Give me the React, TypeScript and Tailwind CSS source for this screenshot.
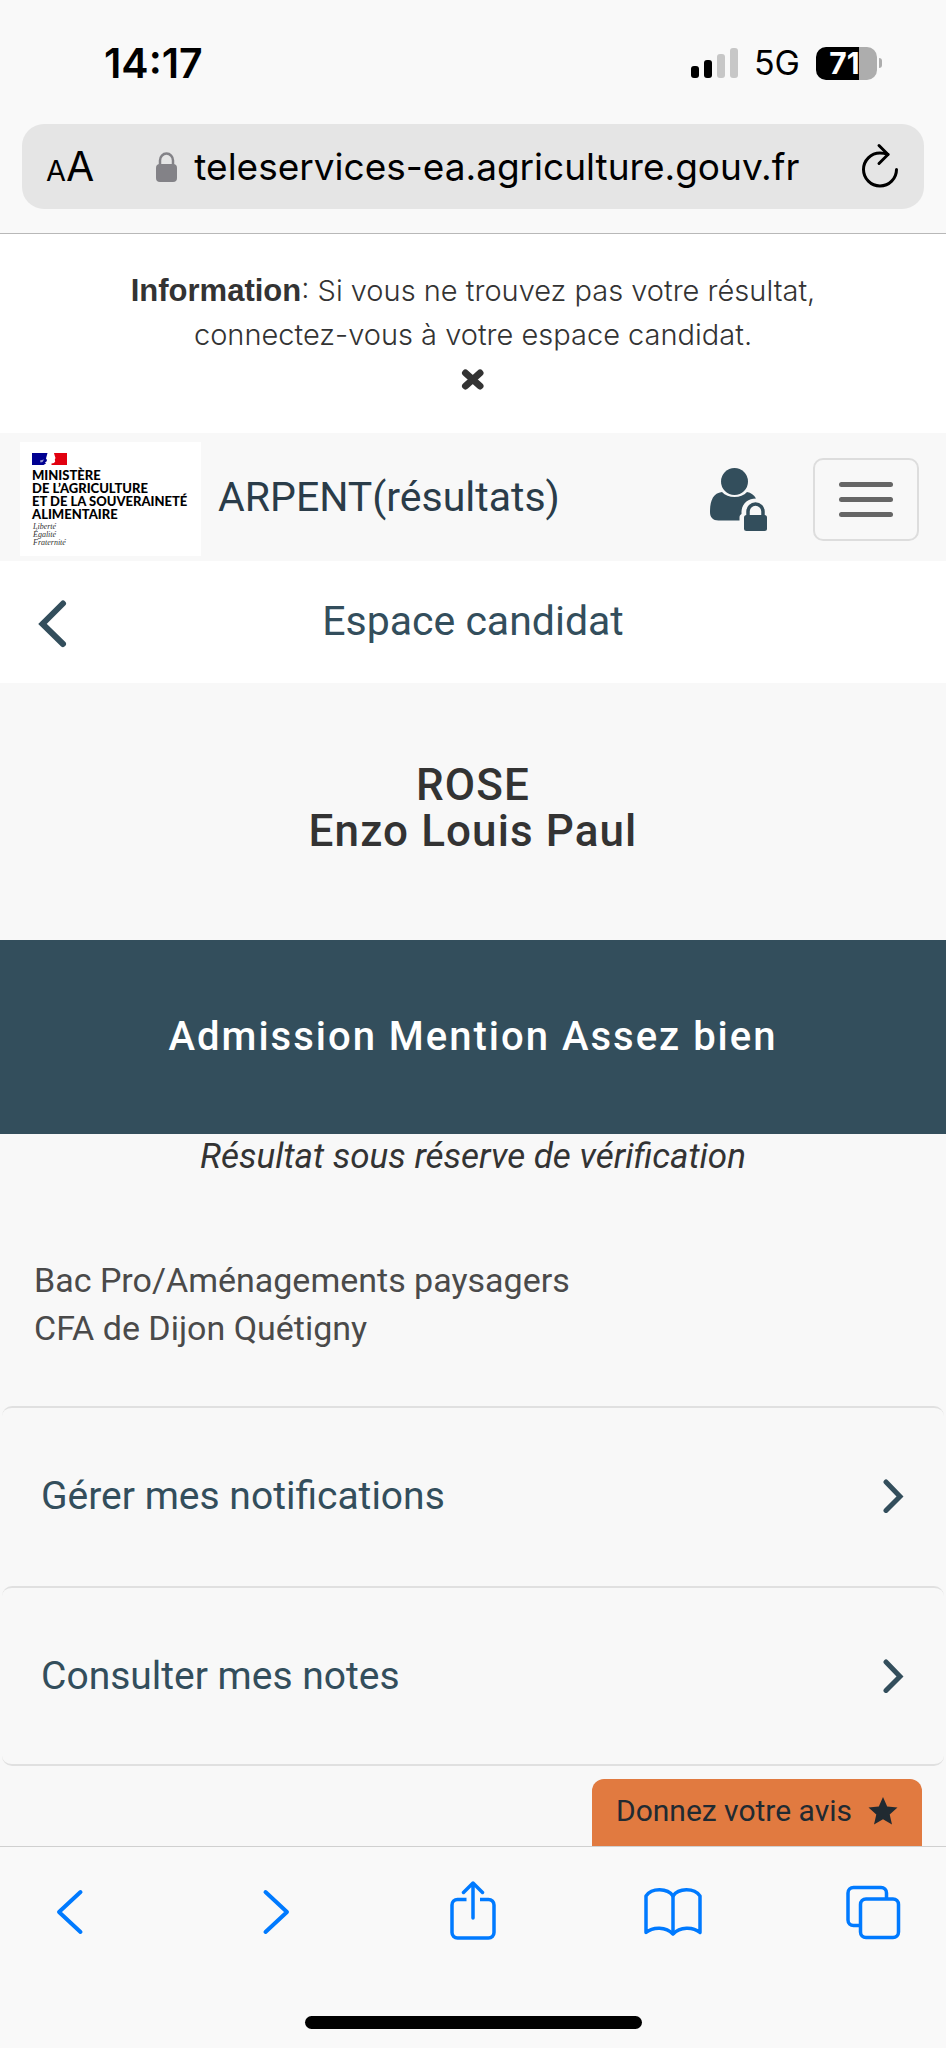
import React from 'react';

const links = [
  { id: 'notifications', label: 'Gérer mes notifications' },
  { id: 'notes', label: 'Consulter mes notes' },
];

function StatusBar() {
  return (
    <div className="flex items-center justify-between pt-[42px] pl-[104px] pr-16 font-['Inter',sans-serif] text-black">
      <time className="text-[41px] leading-[42px] font-semibold">14:17</time>
      <div className="flex items-center">
        <svg width="47" height="31" viewBox="0 0 47 31">
          <rect x="0" y="18" width="8" height="12" rx="3" />
          <rect x="13" y="12" width="8" height="18" rx="3" />
          <rect x="26" y="6" width="8" height="24" rx="3" fill="#c7c7c7" />
          <rect x="39" y="0" width="8" height="30" rx="3" fill="#c7c7c7" />
        </svg>
        <span className="ml-4 text-[34px] leading-[42px]">5G</span>
        <div className="ml-4 flex items-center gap-[2px]">
          <div className="flex h-[33px] w-[61px] items-center justify-center rounded-[10px] bg-[linear-gradient(90deg,#000_71%,#adadad_71%)] pr-1 text-[30px] leading-[33px] font-bold text-white">
            71
          </div>
          <div className="h-[10px] w-[3px] rounded-r-full bg-[#adadad]" />
        </div>
      </div>
    </div>
  );
}

function AddressBar() {
  return (
    <div className="mx-[22px] mt-10 mb-6 flex h-[85px] items-center rounded-[22px] bg-[#e5e5e5] pr-6 pl-6 font-['Inter',sans-serif] text-black">
      <button type="button" aria-label="Taille du texte" className="flex items-baseline pt-1">
        <span className="text-[29px] leading-10">A</span>
        <span className="text-[41px] leading-10">A</span>
      </button>
      <svg className="ml-[62px] shrink-0" width="22" height="30" viewBox="0 0 22 30">
        <rect x="0" y="12" width="21" height="18" rx="4" fill="#838287" />
        <path d="M4 14V8.500a6.500 7 0 0 1 13 0V14" fill="none" stroke="#838287" strokeWidth="2.500" />
      </svg>
      <input
        aria-label="Adresse"
        className="ml-4 min-w-0 flex-1 bg-transparent text-[37px] outline-none"
        defaultValue="teleservices-ea.agriculture.gouv.fr"
      />
      <button type="button" aria-label="Actualiser">
        <svg width="40" height="48" viewBox="0 0 40 48" fill="none" stroke="#000" strokeWidth="3" strokeLinecap="round" strokeLinejoin="round">
          <path d="M36.500 26.500a16.500 16.500 0 1 1-16.500-16.500c3 0 5.500.5 8 1.500" />
          <path d="M19 2.500l9 9-9 9" />
        </svg>
      </button>
    </div>
  );
}

function MinistryLogo() {
  return (
    <div className="h-[114px] w-[181px] bg-white pt-[11px] pl-3 text-black">
      <svg width="35" height="12" viewBox="0 0 35 12">
        <rect width="17" height="12" fill="#000091" />
        <rect x="17" width="18" height="12" fill="#e1000f" />
        <path d="M15.500 0h6.500l.5 2 1 3-.7 1.500.4 2-1.200 1.500-2.500.5V12h-8l2.500-1.500-1-1 1.500-1 .5-1.500-1-1.500z" fill="#fff" />
        <path d="M8 7.500l4-1-1.500 2.500-2 .5z" fill="#fff" opacity=".6" />
      </svg>
      <div className="mt-[4px] font-['Lato',sans-serif] text-[13px] leading-[13px] font-black whitespace-nowrap">
        <p>MINISTÈRE</p>
        <p>DE L’AGRICULTURE</p>
        <p>ET DE LA SOUVERAINETÉ</p>
        <p>ALIMENTAIRE</p>
      </div>
      <div className="mt-[2px] pl-[1px] font-['Liberation_Serif',serif] text-[8px] leading-[8px] text-[#333] italic">
        <p>Liberté</p>
        <p>Égalité</p>
        <p>Fraternité</p>
      </div>
    </div>
  );
}

function Navbar() {
  return (
    <nav className="flex items-center bg-[#f8f8f8] pt-[9px] pr-[27px] pb-[5px] pl-5">
      <MinistryLogo />
      <a href="#accueil" className="ml-[17px] pb-1 text-[41px] leading-[48px] text-[#2a3c49]">
        ARPENT(résultats)
      </a>
      <a href="#connexion" aria-label="Connexion" className="mr-[46px] ml-auto">
        <svg width="57" height="63" viewBox="0 0 57 63" fill="#334e5c">
          <circle cx="24.500" cy="13.500" r="13.500" />
          <path d="M12 24c3 3.500 7.500 5 12.500 5s9.500-1.500 12.500-5c4 .5 7 3 9 6.500-8 0-14 5-14.500 13v2.500c-1.500.8-2 2-2 3.500v3H8.500c-5.500 0-8.500-3-8.500-8.500C0 33 3 25 12 24z" />
          <rect x="34" y="47" width="23" height="16" rx="2.500" />
          <path d="M38 49v-5.500a7.500 7.500 0 0 1 15 0V49" fill="none" stroke="#334e5c" strokeWidth="3.500" />
        </svg>
      </a>
      <button type="button" aria-label="Menu" className="flex h-[83px] w-[106px] flex-col items-center justify-center gap-[10px] rounded-[10px] border-2 border-[#ddd]">
        <span className="h-[5px] w-[54px] rounded-full bg-[#666]" />
        <span className="h-[5px] w-[54px] rounded-full bg-[#666]" />
        <span className="h-[5px] w-[54px] rounded-full bg-[#666]" />
      </button>
    </nav>
  );
}

function Toolbar() {
  return (
    <footer className="border-t border-[#d0d0d0] bg-[#f9f9f9] pt-[34px] pb-[19px]">
      <div className="flex justify-between px-[43px]">
        <button type="button" aria-label="Précédent">
          <svg width="60" height="62" viewBox="0 0 60 62" fill="none" stroke="#007aff" strokeWidth="4" strokeLinecap="round" strokeLinejoin="round">
            <path d="M37.500 11L16 31L37.500 51" />
          </svg>
        </button>
        <button type="button" aria-label="Suivant">
          <svg width="60" height="62" viewBox="0 0 60 62" fill="none" stroke="#007aff" strokeWidth="4" strokeLinecap="round" strokeLinejoin="round">
            <path d="M22.500 11L44 31L22.500 51" />
          </svg>
        </button>
        <button type="button" aria-label="Partager">
          <svg width="60" height="62" viewBox="0 0 60 62" fill="none" stroke="#007aff" strokeWidth="3.500" strokeLinecap="round" strokeLinejoin="round">
            <path d="M23.500 18.500H14.500a5.500 5.500 0 0 0-5.500 5.500v27.500a5.500 5.500 0 0 0 5.500 5.500h31a5.500 5.500 0 0 0 5.500-5.500V24a5.500 5.500 0 0 0-5.500-5.500H37" strokeLinecap="butt" />
            <path d="M30 37V2.500M20.500 11.500L30 2L39.500 11.500" />
          </svg>
        </button>
        <button type="button" aria-label="Signets">
          <svg width="60" height="62" viewBox="0 0 60 62" fill="none" stroke="#007aff" strokeWidth="3.500" strokeLinecap="round" strokeLinejoin="round">
            <path d="M30 15C24.500 7 9 6.500 3 15V51.500c7-6 20-6 27 1.500C37 45.500 50 45.500 57 51.500V15C51 6.500 35.500 7 30 15z" />
            <path d="M30 15V52.500" />
          </svg>
        </button>
        <button type="button" aria-label="Onglets">
          <svg width="60" height="62" viewBox="0 0 60 62" fill="none" stroke="#007aff" strokeWidth="3.500">
            <path d="M17.500 44.500H10.500a5.500 5.500 0 0 1-5.500-5.500V12a5.500 5.500 0 0 1 5.500-5.500h27.500a5.500 5.500 0 0 1 5.500 5.500v6.500" />
            <rect x="17.500" y="18" width="38" height="38.500" rx="5.500" />
          </svg>
        </button>
      </div>
      <div className="mx-auto mt-[73px] h-[13px] w-[337px] rounded-full bg-black" />
    </footer>
  );
}

function App() {
  return (
    <div className="flex min-h-screen flex-col bg-[#f8f8f8] font-['Roboto',sans-serif] text-[#333]">
      <header className="border-b border-[#b8b8b8] bg-[#f9f9f9]">
        <StatusBar />
        <AddressBar />
      </header>

      <div className="bg-white px-24 pt-[35px] pb-8 text-center font-['Inter',sans-serif] text-[29px] leading-[44px] font-light">
        <p>
          <strong className="font-['Liberation_Sans',sans-serif] text-[31px] font-bold">Information</strong>: Si vous ne
          trouvez pas votre résultat, <br />
          connectez-vous à votre espace candidat.
        </p>
        <button type="button" aria-label="Fermer" className="mx-auto flex h-[44px] items-center">
          <svg width="24" height="21" viewBox="0 0 24 21" stroke="#333" strokeWidth="7" strokeLinecap="round">
            <path d="M4.500 4L19 17M19 4L4.500 17" />
          </svg>
        </button>
      </div>

      <Navbar />

      <div className="grid grid-cols-[1fr_auto_1fr] items-center bg-white px-9 pt-[36px] pb-[38px] text-[#334e5c]">
        <a href="#retour" aria-label="Retour">
          <svg width="32" height="54" viewBox="0 -6 32 54" className="-my-1" fill="none" stroke="#334e5c" strokeWidth="6" strokeLinecap="round">
            <path d="M27 3.500L6.500 24L27 44" />
          </svg>
        </a>
        <h1 className="text-[41px] leading-[48px]">Espace candidat</h1>
      </div>

      <main className="flex flex-1 flex-col">
        <h2 className="pt-[79px] pb-[86px] text-center text-[44px] leading-[46px] font-medium tracking-wide">
          ROSE
          <br />
          Enzo Louis Paul
        </h2>
        <p className="bg-[#334e5c] py-[73px] text-center text-[40px] leading-[48px] font-medium tracking-wider text-white">
          Admission Mention Assez bien
        </p>
        <p className="text-center text-[35px] leading-[46px] italic">Résultat sous réserve de vérification</p>
        <p className="px-[34px] pt-[76px] pb-[54px] text-[34px] leading-[48px] text-[#4a4a4a]">
          Bac Pro/Aménagements paysagers
          <br />
          CFA de Dijon Quétigny
        </p>

        <ul className="mx-[2px]">
          {links.map((link) => (
            <li key={link.id} className="group">
              <a
                href={'#' + link.id}
                className="flex items-center justify-between rounded-[10px] border-t-2 border-[#e0e0e0] pt-16 pb-[66px] pr-[38px] pl-[39px] text-[39px] leading-[48px] text-[#334e5c] group-last:border-b-2 group-last:pb-16"
              >
                {link.label}
                <svg width="24" height="34" viewBox="0 0 24 34" fill="none" stroke="#334e5c" strokeWidth="5" strokeLinecap="round">
                  <path d="M4 3L18 17.500L4 31.500" />
                </svg>
              </a>
            </li>
          ))}
        </ul>

        <a href="#avis" className="mt-auto mr-6 flex items-center gap-4 self-end rounded-t-xl bg-[#e17a40] pt-[14px] pr-6 pb-[17px] pl-6 text-[30px] leading-9 text-[#212a31]">
          Donnez votre avis
          <svg width="30" height="28" viewBox="0 0 30 28" fill="#212a31">
            <path d="M15 0l4.200 9.500 10.300 1-7.800 6.900 2.300 10.200-9-5.400-9 5.400 2.300-10.200L.5 10.500l10.300-1z" />
          </svg>
        </a>
      </main>

      <Toolbar />
    </div>
  );
}

export default App;
